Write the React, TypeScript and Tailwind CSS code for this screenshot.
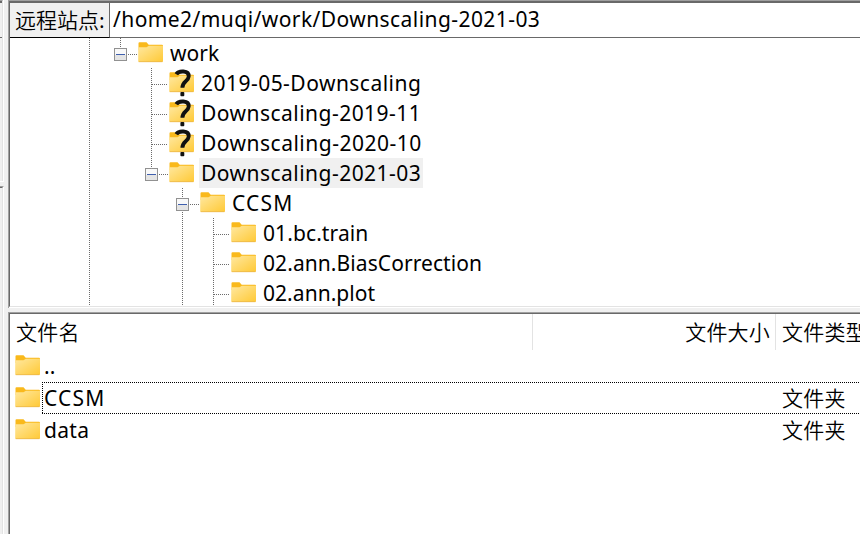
import React from "react";

const latin = "font-['Noto_Sans','Noto_Sans_CJK_SC',sans-serif]";
const cjk = "font-['Noto_Sans_CJK_SC',sans-serif] font-[350] tracking-[0.2px]";

function Folder({ unknown = false }: { unknown?: boolean }) {
  return (
    <svg width="25" height="30" viewBox="0 0 25 30" className="block shrink-0 overflow-visible">
      <defs>
        <linearGradient id="folderFace" x1="0" y1="0" x2="1" y2="1">
          <stop offset="0" stopColor="#ffe8a0" />
          <stop offset="1" stopColor="#ffc935" />
        </linearGradient>
      </defs>
      <path d="M0.5 5.300a1 1 0 0 1 1-1h7l2.200 2.500H24a1 1 0 0 1 1 1V12H0.5z" fill="#f9b91c" />
      <path d="M0.200 9.300h8.300l2.400-1.500H25V23a1 1 0 0 1-1 1H1.200a1 1 0 0 1-1-1z" fill="url(#folderFace)" />
      <path d="M0.700 23.700h23.800" stroke="#eab54a" strokeWidth="0.800" />
      {unknown && (
        <>
          <path d="M7.300 6.200C9.500 2.600 20.100 2 19.700 8.500c-.3 4.900-6.300 4.700-6.300 11.300" fill="none" stroke="#111" strokeWidth="3.900" />
          <rect x="11.400" y="24" width="3.900" height="4.200" rx="1" fill="#111" />
        </>
      )}
    </svg>
  );
}

type Line = "none" | "full" | "openLast" | "branch" | "openFirst";

function Connector({ kind }: { kind: Line }) {
  const box = kind === "openLast" || kind === "openFirst";
  const dots = { stroke: "#6b6b6b", strokeWidth: 1, strokeDasharray: "1 1" };
  return (
    <svg width="31" height="30" className="block shrink-0 overflow-visible" shapeRendering="crispEdges">
      {(kind === "full" || kind === "branch") && <line x1="15.5" y1="0" x2="15.5" y2="30" {...dots} />}
      {box && <line x1="15.5" y1="0" x2="15.5" y2="9" {...dots} />}
      {kind === "openFirst" && <line x1="15.5" y1="24" x2="15.5" y2="30" {...dots} />}
      {kind === "branch" && <line x1="16" y1="16.5" x2="32" y2="16.5" {...dots} />}
      {box && (
        <>
          <line x1="23" y1="16.5" x2="32" y2="16.5" {...dots} />
          <rect x="9.500" y="10.500" width="12" height="12" fill="#f8f8f8" stroke="#919191" />
          <rect x="10" y="17" width="11" height="5" fill="#e4e4e4" />
          <line x1="11" y1="16.5" x2="20" y2="16.5" stroke="#3f5fae" />
        </>
      )}
    </svg>
  );
}

const tree: { name: string; lines: Line[]; unknown?: boolean; selected?: boolean; track: string }[] = [
  { name: "work", lines: ["full", "openLast"], track: "tracking-[0px]" },
  { name: "2019-05-Downscaling", lines: ["full", "none", "branch"], unknown: true, track: "tracking-[0.47px]" },
  { name: "Downscaling-2019-11", lines: ["full", "none", "branch"], unknown: true, track: "tracking-[0.47px]" },
  { name: "Downscaling-2020-10", lines: ["full", "none", "branch"], unknown: true, track: "tracking-[0.49px]" },
  { name: "Downscaling-2021-03", lines: ["full", "none", "openLast"], selected: true, track: "tracking-[0.47px]" },
  { name: "CCSM", lines: ["full", "none", "none", "openFirst"], track: "tracking-[1.2px]" },
  { name: "01.bc.train", lines: ["full", "none", "none", "full", "branch"], track: "tracking-[0.1px]" },
  { name: "02.ann.BiasCorrection", lines: ["full", "none", "none", "full", "branch"], track: "tracking-[0.08px]" },
  { name: "02.ann.plot", lines: ["full", "none", "none", "full", "branch"], track: "tracking-[0.05px]" },
];

const files = [
  { name: "..", type: "", track: "tracking-[0px]" },
  { name: "CCSM", type: "文件夹", focused: true, track: "tracking-[1.2px]" },
  { name: "data", type: "文件夹", track: "tracking-[0.3px]" },
];

export default function App() {
  return (
    <div className={`flex h-[534px] w-[860px] overflow-hidden bg-[#f0f0f0] text-[21px] text-black ${latin}`}>
      <div className="flex w-[8px] shrink-0 flex-col">
        <div className="flex h-[182px] w-[4px] flex-col border-r border-b border-white">
          <div className="flex grow flex-col border-t border-r border-t-[#a0a0a0] border-r-[#e3e3e3]">
            <div className="h-[37px] border-t-2 border-b border-[#696969]" />
          </div>
        </div>
        <div className="mt-[4px] flex w-[4px] grow border-t border-r border-t-[#a0a0a0] border-r-white">
          <div className="grow border-t border-r border-t-[#696969] border-r-[#e3e3e3]" />
        </div>
      </div>
      <div className="flex min-w-0 grow flex-col">
        <div className="flex h-[308px] shrink-0 flex-col border-t border-l border-[#a0a0a0]">
          <div className="flex h-[37px] shrink-0 border-t-2 border-l border-[#696969]">
            <div className="w-[100px] shrink-0 border-r border-b border-r-[#696969] border-b-black bg-[#f0f0f0] pl-[5px] font-['Noto_Sans_CJK_SC',sans-serif] leading-[32px] font-[350] whitespace-nowrap">
              远程站点:
            </div>
            <div className="flex grow items-center border-b border-[#696969] bg-white pl-[3px] whitespace-nowrap">
              <span className="tracking-[0.43px]">/home2/muqi/work/Downscaling-2021-03</span>
            </div>
          </div>
          <div className="h-[269px] overflow-hidden border-b border-l border-b-[#e3e3e3] border-l-[#696969] bg-white pl-[64px]">
            {tree.map((n) => (
              <div key={n.name} className="flex h-[30px]">
                {n.lines.map((l, i) => (
                  <Connector key={i} kind={l} />
                ))}
                <div className="ml-[2px] flex">
                  <Folder unknown={n.unknown} />
                  <span className={`ml-[5px] pr-[2px] pl-[2px] leading-[30px] whitespace-nowrap ${n.track} ${n.selected ? "bg-[#f0f0f0]" : ""}`}>
                    {n.name}
                  </span>
                </div>
              </div>
            ))}
          </div>
          <div className="h-px bg-white" />
        </div>
        <div className="mt-[4px] flex grow flex-col border-t border-l border-[#a0a0a0]">
          <div className="grow border-t border-l border-[#696969] bg-white">
            <div className={`flex h-[36px] leading-[34px] whitespace-nowrap ${cjk}`}>
              <div className="w-[523px] shrink-0 border-r border-[#e3e3e3] pl-[6px]">文件名</div>
              <div className="w-[243px] shrink-0 border-r border-[#e3e3e3] pr-[5px] text-right">文件大小</div>
              <div className="min-w-0 grow overflow-hidden pl-[6px]">文件类型</div>
            </div>
            {files.map((f) => (
              <div key={f.name} className="flex h-[32px] pl-[5px] leading-[32px]">
                <div className="pt-px">
                  <Folder />
                </div>
                <div className="relative ml-[2px] flex grow">
                  <span className={`w-[740px] shrink-0 pl-[2px] ${f.track}`}>{f.name}</span>
                  <span className={`leading-[30px] whitespace-nowrap ${cjk}`}>{f.type}</span>
                  {f.focused && (
                    <svg width="820" height="32" className="absolute top-0 left-0" shapeRendering="crispEdges">
                      <path d="M0 .5H820M.5 0V32M0 31.500H820" fill="none" stroke="#000" strokeDasharray="1 1" />
                    </svg>
                  )}
                </div>
              </div>
            ))}
          </div>
        </div>
      </div>
    </div>
  );
}
